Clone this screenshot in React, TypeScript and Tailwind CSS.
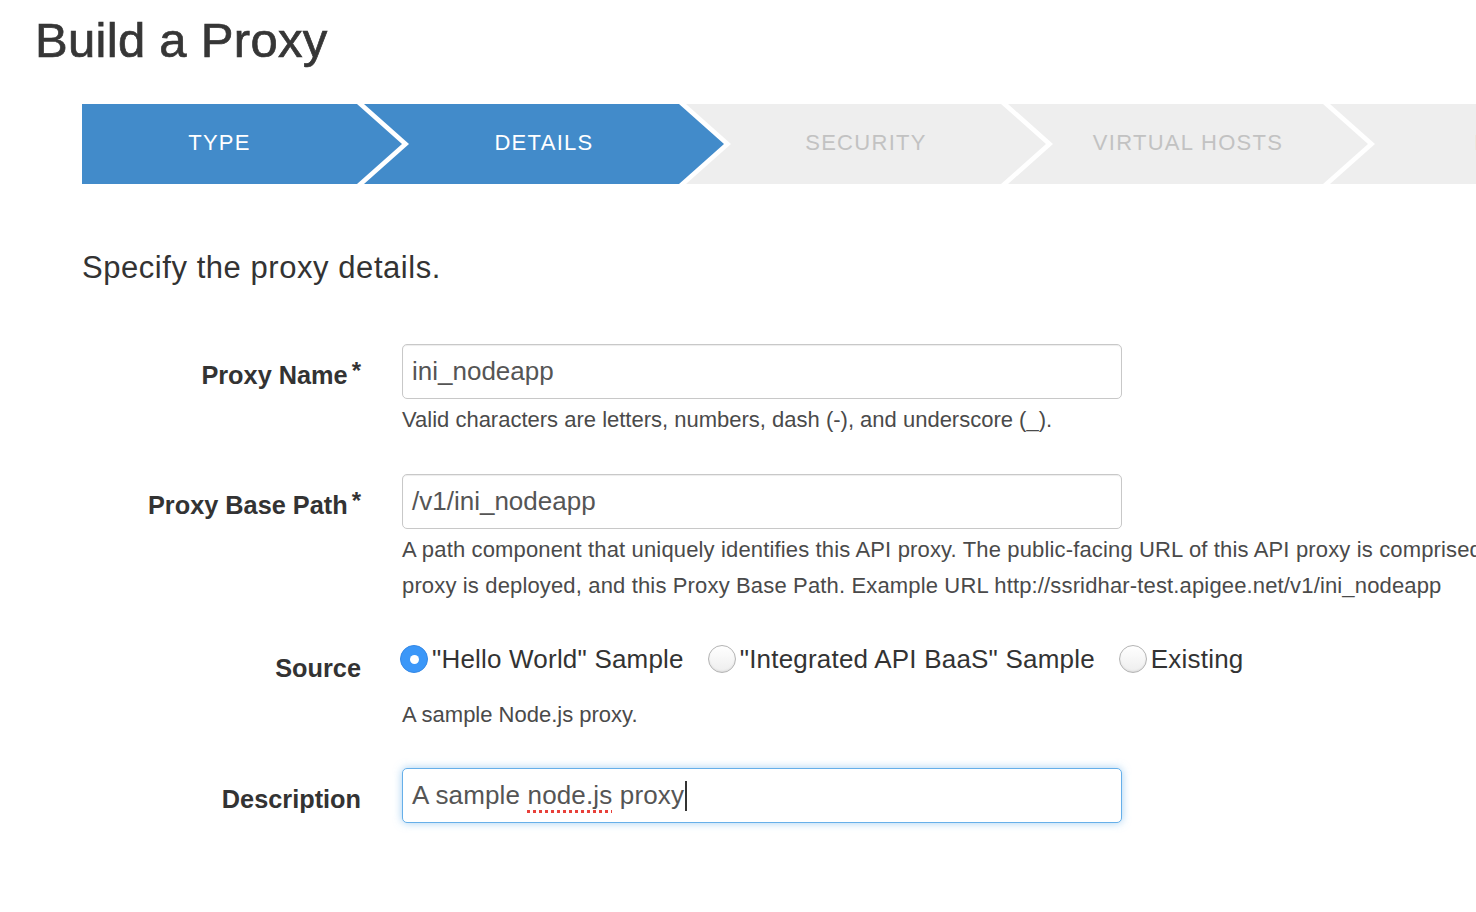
import React from "react";

const steps = [
  { label: "TYPE", done: true },
  { label: "DETAILS", done: true },
  { label: "SECURITY", done: false },
  { label: "VIRTUAL HOSTS", done: false },
  { label: "BUILD", done: false },
];

function Stepper() {
  return (
    <div className="flex pl-[82px] mt-[39px] h-[80px]">
      {steps.map((s, i) => (
        <div
          key={s.label}
          className={`shrink-0 h-[80px] flex items-center justify-center pb-[4px] text-[22px] tracking-[1.3px] ${
            i === 0
              ? "w-[320px] pr-[45px] [clip-path:polygon(0_0,calc(100%_-_45px)_0,100%_50%,calc(100%_-_45px)_100%,0_100%)]"
              : "w-[360px] -ml-[38px] px-[45px] [clip-path:polygon(0_0,calc(100%_-_45px)_0,100%_50%,calc(100%_-_45px)_100%,0_100%,45px_50%)]"
          } ${s.done ? "bg-[#428bca] text-white" : "bg-[#eeeeee] text-[#c2c2c2]"}`}
        >
          <span className="whitespace-nowrap">{s.label}</span>
        </div>
      ))}
    </div>
  );
}

function Label({ text, required, pt }: { text: string; required?: boolean; pt: string }) {
  return (
    <div className={`w-[361px] shrink-0 text-right font-bold text-[25.3px] leading-[26px] text-[#333] whitespace-nowrap ${pt}`}>
      {text}
      {required && <span className="relative -top-[5px] ml-[4px] text-[24px]">*</span>}
    </div>
  );
}

function TextBox({ value }: { value: string }) {
  return (
    <div className="w-[720px] h-[55px] flex items-center px-[9px] border border-[#c8c8c8] rounded-[5px] shadow-[inset_0_1px_1px_rgba(0,0,0,0.075)] text-[26px] text-[#555] bg-white">
      {value}
    </div>
  );
}

function Radio({ checked, label }: { checked?: boolean; label: string }) {
  return (
    <div className="flex items-center">
      {checked ? (
        <span className="w-[28px] h-[28px] rounded-full bg-[#3b97f8] border border-[#3488e6] flex items-center justify-center">
          <span className="w-[9px] h-[9px] rounded-full bg-white" />
        </span>
      ) : (
        <span className="w-[28px] h-[28px] rounded-full border border-[#b4b4b4] bg-gradient-to-b from-white to-[#eeeeee] shadow-[inset_0_-1px_2px_rgba(0,0,0,0.08)]" />
      )}
      <span className="ml-[4px] text-[26px] tracking-[0.2px] text-[#333] whitespace-nowrap">{label}</span>
    </div>
  );
}

const help = "text-[22px] leading-[36px] text-[#4a4a4a] whitespace-nowrap";

export default function App() {
  return (
    <div className="w-full h-[912px] overflow-hidden bg-white font-['Liberation_Sans',Arial,sans-serif]">
      <h1 className="pl-[35px] pt-[16px] text-[49px] leading-[49px] h-[65px] text-[#363636] tracking-[0.3px] [-webkit-text-stroke:0.7px_#363636]">
        Build a Proxy
      </h1>

      <Stepper />

      <p className="pl-[82px] mt-[69px] text-[31px] leading-[30px] tracking-[0.55px] text-[#333]">
        Specify the proxy details.
      </p>

      {/* Proxy Name */}
      <div className="flex mt-[61px]">
        <Label text="Proxy Name" required pt="pt-[18px]" />
        <div className="ml-[41px]">
          <TextBox value="ini_nodeapp" />
          <p className={`mt-[3px] ${help}`}>
            Valid characters are letters, numbers, dash (-), and underscore (_).
          </p>
        </div>
      </div>

      {/* Proxy Base Path */}
      <div className="flex mt-[36px]">
        <Label text="Proxy Base Path" required pt="pt-[18px]" />
        <div className="ml-[41px]">
          <TextBox value="/v1/ini_nodeapp" />
          <p className={`mt-[3px] tracking-[0.15px] ${help}`}>
            A path component that uniquely identifies this API proxy. The public-facing URL of this API proxy is comprised of your organization name, an environment where this API
            <br />
            proxy is deployed, and this Proxy Base Path. Example URL http://ssridhar-test.apigee.net/v1/ini_nodeapp
          </p>
        </div>
      </div>

      {/* Source */}
      <div className="flex mt-[37px]">
        <Label text="Source" pt="pt-[14px]" />
        <div className="ml-[39px]">
          <div className="flex items-center h-[36px] gap-[24px]">
            <Radio checked label={'"Hello World" Sample'} />
            <Radio label={'"Integrated API BaaS" Sample'} />
            <Radio label="Existing" />
          </div>
          <p className={`mt-[20px] pl-[2px] ${help}`}>A sample Node.js proxy.</p>
        </div>
      </div>

      {/* Description */}
      <div className="flex mt-[35px]">
        <Label text="Description" pt="pt-[18px]" />
        <div className="ml-[41px]">
          <div className="w-[720px] h-[55px] flex items-center px-[9px] border border-[#66afe9] rounded-[5px] shadow-[0_0_8px_rgba(102,175,233,0.6)] text-[26px] tracking-[0.15px] text-[#555] bg-white">
            <span className="whitespace-pre">A sample </span>
            <span className="underline decoration-dotted decoration-[#e8403a] decoration-[3px] underline-offset-[6px]">
              node.js
            </span>
            <span className="whitespace-pre"> proxy</span>
            <span className="w-[2px] h-[30px] bg-[#333] ml-[1px]" />
          </div>
        </div>
      </div>
    </div>
  );
}
